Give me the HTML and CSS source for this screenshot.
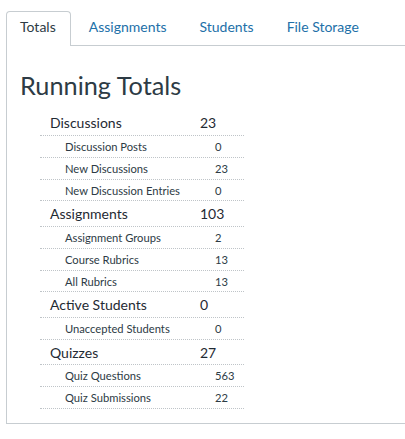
FILE: index.html
```html
<!DOCTYPE html>
<html>
<head>
<meta charset="utf-8">
<link rel="stylesheet" href="styles.css">
</head>
<body>
<div class="tabs">
  <ul class="tab-list">
    <li class="tab active"><span>Totals</span></li>
    <li class="tab"><a href="#">Assignments</a></li>
    <li class="tab"><a href="#">Students</a></li>
    <li class="tab"><a href="#">File Storage</a></li>
  </ul>
  <div class="panel">
    <h1 class="title">Running Totals</h1>
    <div class="totals">
      <div class="row cat"><span class="name">Discussions</span><span class="val">23</span></div>
      <div class="row sub"><span class="name">Discussion Posts</span><span class="val">0</span></div>
      <div class="row sub"><span class="name">New Discussions</span><span class="val">23</span></div>
      <div class="row sub"><span class="name">New Discussion Entries</span><span class="val">0</span></div>
      <div class="row cat"><span class="name">Assignments</span><span class="val">103</span></div>
      <div class="row sub"><span class="name">Assignment Groups</span><span class="val">2</span></div>
      <div class="row sub"><span class="name">Course Rubrics</span><span class="val">13</span></div>
      <div class="row sub"><span class="name">All Rubrics</span><span class="val">13</span></div>
      <div class="row cat"><span class="name">Active Students</span><span class="val">0</span></div>
      <div class="row sub"><span class="name">Unaccepted Students</span><span class="val">0</span></div>
      <div class="row cat"><span class="name">Quizzes</span><span class="val">27</span></div>
      <div class="row sub"><span class="name">Quiz Questions</span><span class="val">563</span></div>
      <div class="row sub"><span class="name">Quiz Submissions</span><span class="val">22</span></div>
    </div>
  </div>
</div>
</body>
</html>
```
FILE: styles.css
```css
html, body {
  margin: 0;
  padding: 0;
  background: #fff;
  overflow: hidden;
}
body {
  font-family: Lato, "Open Sans", sans-serif;
  color: #2d3b45;
}
.tabs {
  padding: 11px 0 0 6px;
}
.tab-list {
  list-style: none;
  margin: 0;
  padding: 0;
  display: flex;
  height: 34px;
  border-bottom: 1px solid #c7cdd1;
}
.tab {
  margin-right: 4px;
  font-size: 14px;
  line-height: 30px;
  padding: 0 14px 0 13px;
  border: 1px solid transparent;
  border-bottom: none;
  border-radius: 4px 4px 0 0;
}
.tab a {
  color: #2270a8;
  text-decoration: none;
}
.tab.active {
  border-color: #c7cdd1;
  background: #fff;
  height: 34px;
  margin-bottom: -1px;
  color: #2d3b45;
}
.panel {
  border-left: 1px solid #c7cdd1;
  border-bottom: 1px solid #c7cdd1;
  padding: 23px 0 14px 13px;
}
.title {
  margin: 0 0 9.5px 0;
  font-size: 25.3px;
  font-weight: 400;
  line-height: 32px;
}
.totals {
  width: 204px;
  margin-left: 20px;
}
.row {
  display: flex;
  align-items: center;
  border-bottom: 1px dotted #bfc4c8;
}
.row .name {
  width: 150px;
  padding-left: 10px;
}
.row.cat {
  height: 24.5px;
  font-size: 14px;
  color: #1f2a33;
}
.row.sub {
  height: 20.83px;
  font-size: 11.2px;
}
.row.sub .name {
  padding-left: 25px;
  width: 135px;
}
.row.sub .val {
  padding-left: 15px;
}
```
